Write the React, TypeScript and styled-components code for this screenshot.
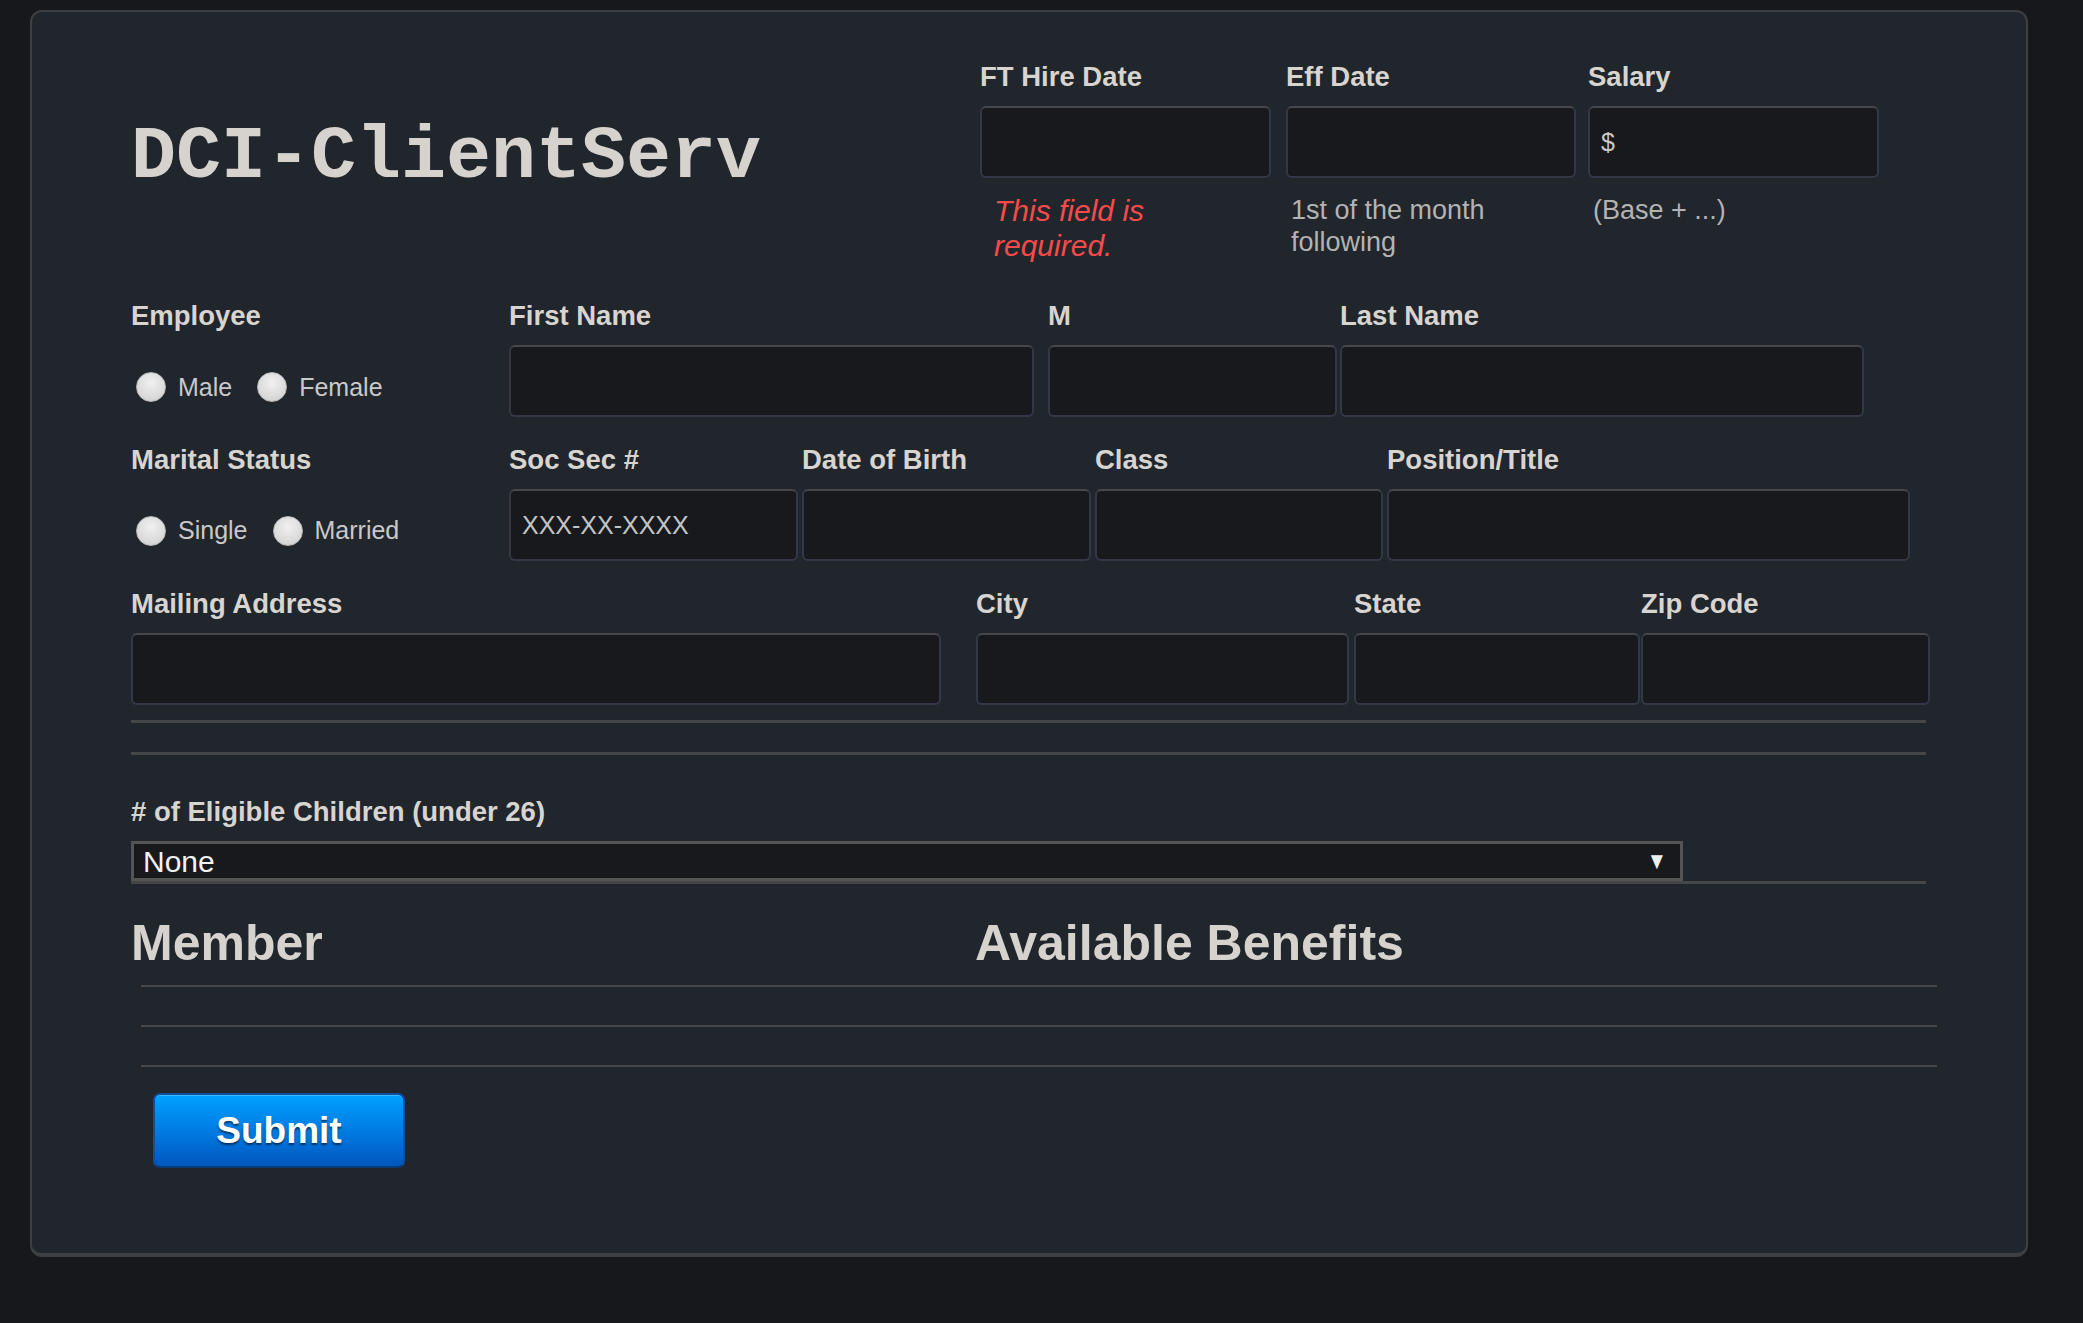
import React from 'react';
import styled, {createGlobalStyle} from 'styled-components';

const GlobalStyle = createGlobalStyle`
  html, body {
    margin: 0;
    padding: 0;
    background: #17181b;
  }
  body {
    font-family: 'Liberation Sans', Arial, sans-serif;
  }
`;

const Page = styled.div`
  min-height: 1323px;
  box-sizing: border-box;
  padding: 10px 0 0 30px;
  background: #17181b;
`;

const Panel = styled.form`
  width: 1998px;
  height: 1247px;
  box-sizing: border-box;
  padding: 49px 0 0 99px;
  background: #21252c;
  border: 2px solid #3d3f42;
  border-bottom-width: 4px;
  border-radius: 12px;
`;

const Header = styled.div`
  display: flex;
  align-items: flex-start;
`;

const Title = styled.h1`
  width: 849px;
  flex: none;
  margin: 59px 0 0;
  font: bold 75px/75px 'Liberation Mono', 'Courier New', monospace;
  color: #d6d3ce;
`;

const Row = styled.div<{$mt: number}>`
  display: flex;
  align-items: flex-start;
  margin-top: ${(p) => p.$mt}px;
`;

const Field = styled.div<{$w: number; $mr?: number}>`
  flex: none;
  width: ${(p) => p.$w}px;
  margin-right: ${(p) => p.$mr ?? 0}px;
`;

const Label = styled.label`
  display: block;
  margin-bottom: 13px;
  font-size: 27.5px;
  font-weight: bold;
  line-height: 32px;
  color: #d8d5d0;
  white-space: nowrap;
`;

const TextInput = styled.input`
  display: block;
  box-sizing: border-box;
  width: 100%;
  height: 72px;
  margin: 0;
  padding: 0 11px;
  background: #18191d;
  border: 2px solid #343746;
  border-top-color: #46484c;
  border-radius: 6px;
  font: 25px 'Liberation Sans', Arial, sans-serif;
  color: #c8c8c8;
  outline: none;

  &::placeholder {
    color: #c4c4c4;
    opacity: 1;
  }
`;

const Hint = styled.div<{$error?: boolean}>`
  margin-top: 16px;
  padding-left: ${(p) => (p.$error ? 14 : 5)}px;
  width: ${(p) => (p.$error ? '230px' : 'auto')};
  font-size: ${(p) => (p.$error ? 30 : 27)}px;
  font-style: ${(p) => (p.$error ? 'italic' : 'normal')};
  line-height: ${(p) => (p.$error ? 34.5 : 32)}px;
  color: ${(p) => (p.$error ? '#f74a4a' : '#b3b3b3')};
`;

const RadioLine = styled.div<{$pt: number}>`
  display: flex;
  align-items: center;
  height: 72px;
  box-sizing: border-box;
  padding-top: ${(p) => p.$pt}px;
`;

const RadioOption = styled.label`
  display: flex;
  align-items: center;
  margin-right: 20px;
  font-size: 25px;
  color: #c9c9c9;
`;

const Radio = styled.input`
  appearance: none;
  width: 30px;
  height: 30px;
  margin: 0 12px 0 5px;
  border-radius: 50%;
  border: 1px solid #b8b8b8;
  background: radial-gradient(circle at 50% 35%, #f0f0f0, #d8d8d8 70%, #c6c6c6);
`;

const Rule = styled.hr<{$mt: number}>`
  width: 1795px;
  height: 0;
  margin: ${(p) => p.$mt}px 0 0;
  border: 0;
  border-top: 3px solid #464646;
`;

const ChildrenBlock = styled.div`
  margin-top: 41px;
  width: 1795px;
  border-bottom: 3px solid #464646;
`;

const SelectBox = styled.div`
  position: relative;
  width: 1552px;
`;

const Select = styled.select`
  display: block;
  appearance: none;
  box-sizing: border-box;
  width: 100%;
  height: 40px;
  margin: 0;
  padding: 0 9px;
  background: #18191d;
  border: 3px solid #545454;
  border-radius: 0;
  font: 30px 'Liberation Sans', Arial, sans-serif;
  color: #f2f2f2;
  outline: none;
`;

const SelectArrow = styled.span`
  position: absolute;
  right: 14px;
  top: 50%;
  transform: translateY(-50%) scaleX(0.85);
  font-size: 24px;
  line-height: 24px;
  color: #eeeeee;
  pointer-events: none;
`;

const Headings = styled.div`
  display: flex;
  margin-top: 28px;
`;

const Heading = styled.h2<{$w?: number}>`
  flex: none;
  width: ${(p) => (p.$w ? `${p.$w}px` : 'auto')};
  margin: 0;
  font-size: 50px;
  font-weight: bold;
  line-height: 62px;
  color: #d6d3ce;
`;

const Table = styled.div`
  width: 1796px;
  margin: 11px 0 0 10px;
  border-bottom: 2px solid #474747;
`;

const TableRow = styled.div`
  height: 40px;
  box-sizing: border-box;
  border-top: 2px solid #474747;
`;

const SubmitButton = styled.button`
  display: block;
  width: 252px;
  height: 75px;
  margin: 26px 0 0 22px;
  background: linear-gradient(#00a0ff, #0078e0 55%, #0056bd);
  border: 2px solid #0b4f9e;
  border-bottom-color: #083d7c;
  border-radius: 7px;
  box-shadow: inset 0 1px 0 rgba(255, 255, 255, 0.25);
  font: bold 37px 'Liberation Sans', Arial, sans-serif;
  color: #ffffff;
  text-shadow: 0 2px 2px rgba(0, 0, 0, 0.55);
  cursor: pointer;
`;

const App: React.FC = () => (
  <Page>
    <GlobalStyle />
    <Panel onSubmit={(e) => e.preventDefault()}>
      <Header>
        <Title>DCI-ClientServ</Title>
        <Field $w={291} $mr={15}>
          <Label>FT Hire Date</Label>
          <TextInput type="text" />
          <Hint $error>This field is required.</Hint>
        </Field>
        <Field $w={290} $mr={12}>
          <Label>Eff Date</Label>
          <TextInput type="text" />
          <Hint>1st of the month following</Hint>
        </Field>
        <Field $w={291}>
          <Label>Salary</Label>
          <TextInput type="text" defaultValue="$" />
          <Hint>(Base + ...)</Hint>
        </Field>
      </Header>

      <Row $mt={37}>
        <Field $w={378}>
          <Label>Employee</Label>
          <RadioLine $pt={12}>
            <RadioOption>
              <Radio type="radio" name="gender" />
              Male
            </RadioOption>
            <RadioOption>
              <Radio type="radio" name="gender" />
              Female
            </RadioOption>
          </RadioLine>
        </Field>
        <Field $w={525} $mr={14}>
          <Label>First Name</Label>
          <TextInput type="text" />
        </Field>
        <Field $w={289} $mr={3}>
          <Label>M</Label>
          <TextInput type="text" />
        </Field>
        <Field $w={524}>
          <Label>Last Name</Label>
          <TextInput type="text" />
        </Field>
      </Row>

      <Row $mt={27}>
        <Field $w={378}>
          <Label>Marital Status</Label>
          <RadioLine $pt={11}>
            <RadioOption>
              <Radio type="radio" name="marital" />
              Single
            </RadioOption>
            <RadioOption>
              <Radio type="radio" name="marital" />
              Married
            </RadioOption>
          </RadioLine>
        </Field>
        <Field $w={289} $mr={4}>
          <Label>Soc Sec #</Label>
          <TextInput type="text" placeholder="XXX-XX-XXXX" />
        </Field>
        <Field $w={289} $mr={4}>
          <Label>Date of Birth</Label>
          <TextInput type="text" />
        </Field>
        <Field $w={288} $mr={4}>
          <Label>Class</Label>
          <TextInput type="text" />
        </Field>
        <Field $w={523}>
          <Label>Position/Title</Label>
          <TextInput type="text" />
        </Field>
      </Row>

      <Row $mt={27}>
        <Field $w={810} $mr={35}>
          <Label>Mailing Address</Label>
          <TextInput type="text" />
        </Field>
        <Field $w={373} $mr={5}>
          <Label>City</Label>
          <TextInput type="text" />
        </Field>
        <Field $w={286} $mr={1}>
          <Label>State</Label>
          <TextInput type="text" />
        </Field>
        <Field $w={289}>
          <Label>Zip Code</Label>
          <TextInput type="text" />
        </Field>
      </Row>

      <Rule $mt={15} />
      <Rule $mt={29} />

      <ChildrenBlock>
        <Label># of Eligible Children (under 26)</Label>
        <SelectBox>
          <Select defaultValue="0">
            <option value="0">None</option>
            <option value="1">1</option>
            <option value="2">2</option>
            <option value="3">3</option>
          </Select>
          <SelectArrow>▼</SelectArrow>
        </SelectBox>
      </ChildrenBlock>

      <Headings>
        <Heading $w={844}>Member</Heading>
        <Heading>Available Benefits</Heading>
      </Headings>

      <Table>
        <TableRow />
        <TableRow />
      </Table>

      <SubmitButton type="submit">Submit</SubmitButton>
    </Panel>
  </Page>
);

export default App;
